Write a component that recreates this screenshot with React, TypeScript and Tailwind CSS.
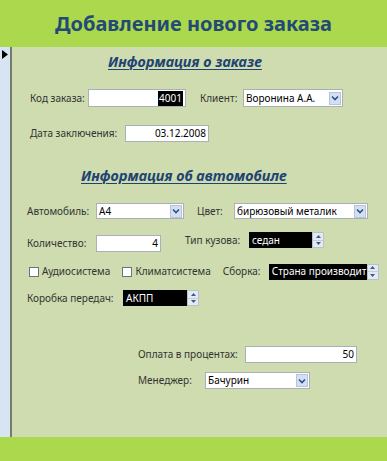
import React from "react";

const Chevron = () => (
  <svg width="8" height="6" viewBox="0 0 8 6">
    <path d="M1 1.5 L4 4.5 L7 1.5" stroke="#2c4f8c" strokeWidth="1.6" fill="none" />
  </svg>
);

const Arrow = ({ up }: { up?: boolean }) => (
  <svg width="5" height="3" viewBox="0 0 5 3">
    <path d={up ? "M0 3 L2.5 0 L5 3 Z" : "M0 0 L2.5 3 L5 0 Z"} fill="#3b5a8c" />
  </svg>
);

type FieldProps = { value: string; className: string };

const Combo = ({ value, className }: FieldProps) => (
  <div className={`flex items-center border border-[#a9b0b8] bg-white ${className}`}>
    <span className="flex-1 truncate pl-[2px] text-black">{value}</span>
    <span className="mr-[1px] flex h-[13px] w-[12px] items-center justify-center border border-[#b5c4dc] bg-[#d4e0f2]">
      <Chevron />
    </span>
  </div>
);

const TextBox = ({ value, className }: FieldProps) => (
  <div className={`flex items-center justify-end border border-[#a9b0b8] bg-white pr-[2px] text-black ${className}`}>
    {value}
  </div>
);

const Spin = ({ value, className }: FieldProps) => (
  <div className={`flex items-stretch ${className}`}>
    <span className="flex flex-1 items-center overflow-hidden whitespace-nowrap bg-black pl-[3px] text-white">{value}</span>
    <span className="flex w-[12px] flex-col border border-[#b8c2cf] bg-[#e4eaf3]">
      <span className="flex flex-1 items-center justify-center border-b border-[#c5cdd8]">
        <Arrow up />
      </span>
      <span className="flex flex-1 items-center justify-center">
        <Arrow />
      </span>
    </span>
  </div>
);

const Check = ({ label }: { label: string }) => (
  <div className="flex items-center">
    <span className="h-[10px] w-[10px] border border-[#6d737a] bg-white" />
    <span className="ml-[3px]">{label}</span>
  </div>
);

const Heading = ({ children, className }: { children: React.ReactNode; className: string }) => (
  <div className={`flex h-[20px] items-center text-[14.5px] font-bold italic text-[#1f4472] underline decoration-1 underline-offset-2 ${className}`}>
    {children}
  </div>
);

export default function App() {
  return (
    <div className="flex h-[461px] w-[387px] flex-col font-['Noto_Sans',sans-serif] text-[10px] text-[#333]">
      <div className="flex h-[47px] shrink-0 items-center justify-center bg-[#acd84e] text-[20px] font-bold text-[#234a74]">
        Добавление нового заказа
      </div>

      <div className="flex flex-1">
        <div className="w-[10px] bg-[#d7e4f1] pl-[2px] pt-[3px]">
          <svg width="6" height="9" viewBox="0 0 6 9">
            <path d="M0 0 L6 4.5 L0 9 Z" fill="#000" />
          </svg>
        </div>
        <div className="w-[2px] bg-[#737c70]" />

        <div className="flex flex-1 flex-col bg-[#cedcaf]">
          <div className="mt-[5px]">
            <Heading className="pl-[96px]">Информация о заказе</Heading>
          </div>

          <div className="mt-[17px] flex h-[18px] items-center pl-[18px]">
            <span className="w-[58px]">Код заказа:</span>
            <div className="flex h-[18px] w-[98px] items-center justify-end border border-[#a9b0b8] bg-white pr-[2px]">
              <span className="bg-black px-[1px] text-white">4001</span>
            </div>
            <span className="ml-[14px] w-[43px]">Клиент:</span>
            <Combo value="Воронина А.А." className="h-[18px] w-[100px]" />
          </div>

          <div className="mt-[18px] flex h-[17px] items-center pl-[18px]">
            <span className="w-[95px]">Дата заключения:</span>
            <TextBox value="03.12.2008" className="h-[17px] w-[84px]" />
          </div>

          <div className="mt-[24px]">
            <Heading className="pl-[69px]">Информация об автомобиле</Heading>
          </div>

          <div className="mt-[17px] flex h-[16px] items-center pl-[15px]">
            <span className="w-[69px]">Автомобиль:</span>
            <Combo value="A4" className="h-[16px] w-[88px]" />
            <span className="ml-[13px] w-[37px]">Цвет:</span>
            <Combo value="бирюзовый металик" className="h-[16px] w-[134px]" />
          </div>

          <div className="mt-[12px] flex h-[21px] items-start pl-[15px]">
            <div className="mt-[4px] flex h-[17px] items-center">
              <span className="w-[69px]">Количество:</span>
              <TextBox value="4" className="h-[17px] w-[65px]" />
            </div>
            <div className="ml-[24px] mt-[1px] flex h-[16px] items-center">
              <span className="w-[64px]">Тип кузова:</span>
              <Spin value="седан" className="h-[16px] w-[75px]" />
            </div>
          </div>

          <div className="mt-[11px] flex h-[17px] items-center pl-[17px]">
            <Check label="Аудиосистема" />
            <div className="ml-[12px]">
              <Check label="Климатсистема" />
            </div>
            <span className="ml-[12px] w-[46px]">Сборка:</span>
            <Spin value="Страна производит" className="h-[16px] w-[110px]" />
          </div>

          <div className="mt-[10px] flex h-[16px] items-center pl-[15px]">
            <span className="w-[96px]">Коробка передач:</span>
            <Spin value="АКПП" className="h-[16px] w-[76px]" />
          </div>

          <div className="mt-[40px] flex h-[17px] items-center pl-[126px]">
            <span className="w-[107px]">Оплата в процентах:</span>
            <TextBox value="50" className="h-[17px] w-[112px]" />
          </div>

          <div className="mt-[9px] flex h-[17px] items-center pl-[126px]">
            <span className="w-[67px]">Менеджер:</span>
            <Combo value="Бачурин" className="h-[17px] w-[105px]" />
          </div>
        </div>
      </div>

      <div className="h-[24px] shrink-0 bg-[#acd84e]" />
    </div>
  );
}
